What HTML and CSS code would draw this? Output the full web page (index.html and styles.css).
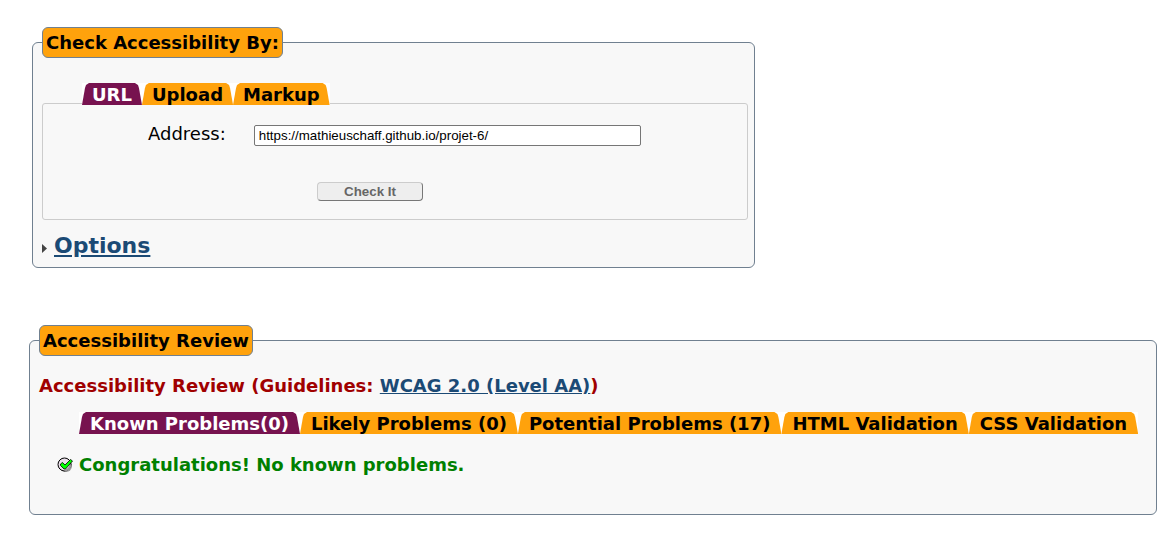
FILE: index.html
```html
<!DOCTYPE html>
<html lang="en">
<head>
<meta charset="utf-8">
<title>Accessibility Checker</title>
<link rel="stylesheet" href="styles.css">
</head>
<body>
<main class="page">
  <form class="checker">
    <fieldset class="group">
      <legend class="group-title">Check Accessibility By:</legend>
      <div class="tabs">
        <button type="button" class="tab active">URL</button>
        <button type="button" class="tab">Upload</button>
        <button type="button" class="tab">Markup</button>
      </div>
      <div class="panel">
        <div class="field">
          <label for="address">Address:</label>
          <input id="address" class="address" type="text" value="https://mathieuschaff.github.io/projet-6/">
        </div>
        <button type="button" class="submit">Check It</button>
      </div>
      <h2 class="options">
        <svg class="arrow" viewBox="0 0 5 9" aria-hidden="true"><path d="M0 0L5 4.5L0 9Z" fill="#444"/></svg>
        <a href="#options">Options</a>
      </h2>
    </fieldset>
  </form>

  <fieldset class="group review">
    <legend class="group-title">Accessibility Review</legend>
    <h3 class="guidelines">Accessibility Review (Guidelines: <a href="#wcag">WCAG 2.0 (Level AA)</a>)</h3>
    <div class="tabs">
      <button type="button" class="tab active">Known Problems(0)</button>
      <button type="button" class="tab">Likely Problems (0)</button>
      <button type="button" class="tab">Potential Problems (17)</button>
      <button type="button" class="tab">HTML Validation</button>
      <button type="button" class="tab">CSS Validation</button>
    </div>
    <p class="result">
      <svg class="check" viewBox="0 0 16 16" aria-hidden="true">
        <circle cx="9" cy="9" r="6" fill="#999"/>
        <circle cx="7.5" cy="7.5" r="6.5" fill="#eadfea" stroke="#000"/>
        <path d="M8 13.5C11 13 13 11 13.5 8" fill="none" stroke="#999" stroke-width="2"/>
        <path d="M3.5 7L5.5 5.5L8 8L13.5 2.5L15.5 4L8.5 12H7L3.5 8.5Z" fill="#0f0" stroke="#000" stroke-width=".8"/>
      </svg>
      Congratulations! No known problems.
    </p>
  </fieldset>
</main>
</body>
</html>
```
FILE: styles.css
```css
* {
  box-sizing: border-box;
}

body {
  margin: 0;
  background: #fff;
  color: #000;
  font: 18px/22px "DejaVu Sans", Verdana, sans-serif;
}

.page {
  padding: 27px 14px 32px 29px;
}

.checker {
  max-width: 726px;
  padding-left: 3px;
}

.group {
  min-width: 0;
  margin: 0;
  padding: 0 6px 8px 9px;
  border: 1px solid #708090;
  border-radius: 6px;
  background: #f8f8f8;
}

.group-title {
  padding: 4px 3px;
  border: 1px solid #708090;
  border-radius: 6px;
  background: #ffa20c;
  font-weight: bold;
  line-height: 21px;
}

.tabs {
  position: relative;
  z-index: 1;
  display: flex;
  margin: 25px 0 0 40px;
}

.tab {
  position: relative;
  z-index: 0;
  height: 22px;
  padding: 1px 10px 0;
  overflow: hidden;
  border: 0;
  background: #fff;
  color: #000;
  font: bold 18px/22px "DejaVu Sans", Verdana, sans-serif;
  white-space: nowrap;
  cursor: pointer;
}

.tab::before {
  content: "";
  position: absolute;
  z-index: -1;
  inset: 0;
  background: #ffa20c;
  clip-path: polygon(0 100%, 3px 5px, 4px 2px, 7px 0, calc(100% - 7px) 0, calc(100% - 4px) 2px, calc(100% - 3px) 5px, 100% 100%);
}

.active {
  color: #fff;
}

.active::before {
  background: #77124f;
}

.panel {
  display: flex;
  flex-direction: column;
  margin-top: -2px;
  padding: 18px 106px 18px 105px;
  border: 1px solid #ccc;
  border-radius: 3px;
}

.field {
  display: flex;
  align-items: center;
  gap: 28px;
}

.address {
  flex: 1;
  min-width: 0;
  height: 21px;
  margin-top: 3px;
  padding: 1px 4px;
  border: 1px solid #767676;
  border-radius: 2px;
  background: #fff;
  color: #000;
  font-family: "Liberation Sans", Arial, sans-serif;
}

.submit {
  width: 106px;
  height: 19px;
  margin: 36px 0 0 169px;
  padding: 0;
  border: 1px solid #777;
  border-top-color: #ccc;
  border-left-color: #ccc;
  border-radius: 4px;
  background: #eee;
  color: #666;
  font-family: "Liberation Sans", Arial, sans-serif;
  font-weight: bold;
}

.options {
  display: flex;
  align-items: center;
  gap: 7px;
  margin: 12px 0 0;
  font-size: 22px;
  line-height: 27px;
}

.arrow {
  width: 5px;
  height: 9px;
  margin-top: 6px;
}

a {
  color: #1b4a75;
}

.review {
  margin-top: 57px;
  padding-bottom: 38px;
}

.guidelines {
  margin: 19px 0 0;
  color: #a00000;
  font-size: 18px;
}

.review .tabs {
  margin-top: 15px;
}

.review .tab {
  padding: 1px 11px 0;
}

.result {
  display: flex;
  align-items: center;
  gap: 6px;
  margin: 20px 0 0 18px;
  color: #008000;
  font-weight: bold;
}

.check {
  flex: none;
  width: 16px;
  height: 16px;
}
```
